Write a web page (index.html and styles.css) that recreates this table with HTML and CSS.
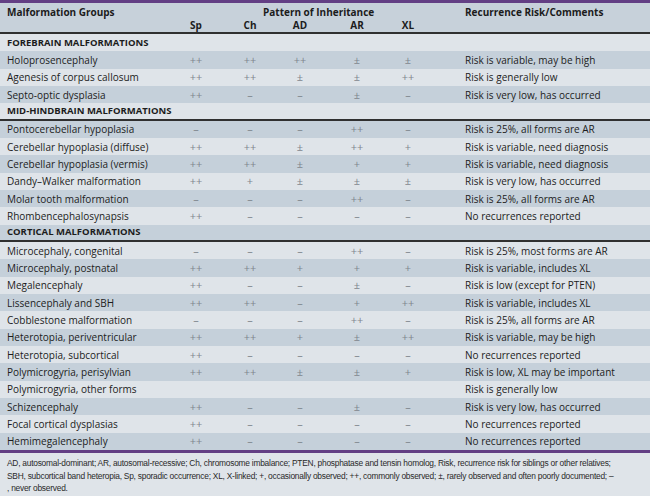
FILE: index.html
```html
<!DOCTYPE html>
<html>
<head>
<meta charset="utf-8">
<link rel="stylesheet" href="styles.css">
</head>
<body>
<div class="page">
  <div class="topbar"></div>
  <div class="thead">
    <div class="hrow">
      <div class="c1">Malformation Groups</div>
      <div class="span">Pattern of Inheritance</div>
      <div class="cm">Recurrence Risk/Comments</div>
    </div>
    <div class="hrow">
      <div class="c1"></div>
      <div class="s">Sp</div><div class="s">Ch</div><div class="s">AD</div><div class="s">AR</div><div class="s">XL</div>
      <div class="cm"></div>
    </div>
  </div>
  <div class="tbody">
    <div class="row sec light"><div class="c1">FOREBRAIN MALFORMATIONS</div></div>
    <div class="row dark"><div class="c1">Holoprosencephaly</div><div class="s">++</div><div class="s">++</div><div class="s">++</div><div class="s">±</div><div class="s">±</div><div class="cm">Risk is variable, may be high</div></div>
    <div class="row light"><div class="c1">Agenesis of corpus callosum</div><div class="s">++</div><div class="s">++</div><div class="s">±</div><div class="s">±</div><div class="s">++</div><div class="cm">Risk is generally low</div></div>
    <div class="row dark"><div class="c1">Septo-optic dysplasia</div><div class="s">++</div><div class="s">–</div><div class="s">–</div><div class="s">±</div><div class="s">–</div><div class="cm">Risk is very low, has occurred</div></div>
    <div class="row sec light ruled"><div class="c1">MID-HINDBRAIN MALFORMATIONS</div></div>
    <div class="row dark"><div class="c1">Pontocerebellar hypoplasia</div><div class="s">–</div><div class="s">–</div><div class="s">–</div><div class="s">++</div><div class="s">–</div><div class="cm">Risk is 25%, all forms are AR</div></div>
    <div class="row light"><div class="c1">Cerebellar hypoplasia (diffuse)</div><div class="s">++</div><div class="s">++</div><div class="s">±</div><div class="s">++</div><div class="s">+</div><div class="cm">Risk is variable, need diagnosis</div></div>
    <div class="row dark"><div class="c1">Cerebellar hypoplasia (vermis)</div><div class="s">++</div><div class="s">++</div><div class="s">±</div><div class="s">+</div><div class="s">+</div><div class="cm">Risk is variable, need diagnosis</div></div>
    <div class="row light"><div class="c1">Dandy–Walker malformation</div><div class="s">++</div><div class="s">+</div><div class="s">±</div><div class="s">±</div><div class="s">±</div><div class="cm">Risk is very low, has occurred</div></div>
    <div class="row dark"><div class="c1">Molar tooth malformation</div><div class="s">–</div><div class="s">–</div><div class="s">–</div><div class="s">++</div><div class="s">–</div><div class="cm">Risk is 25%, all forms are AR</div></div>
    <div class="row light"><div class="c1">Rhombencephalosynapsis</div><div class="s">++</div><div class="s">–</div><div class="s">–</div><div class="s">–</div><div class="s">–</div><div class="cm">No recurrences reported</div></div>
    <div class="row sec dark ruled"><div class="c1">CORTICAL MALFORMATIONS</div></div>
    <div class="row light"><div class="c1">Microcephaly, congenital</div><div class="s">–</div><div class="s">–</div><div class="s">–</div><div class="s">++</div><div class="s">–</div><div class="cm">Risk is 25%, most forms are AR</div></div>
    <div class="row dark"><div class="c1">Microcephaly, postnatal</div><div class="s">++</div><div class="s">++</div><div class="s">+</div><div class="s">+</div><div class="s">+</div><div class="cm">Risk is variable, includes XL</div></div>
    <div class="row light"><div class="c1">Megalencephaly</div><div class="s">++</div><div class="s">–</div><div class="s">–</div><div class="s">±</div><div class="s">–</div><div class="cm">Risk is low (except for PTEN)</div></div>
    <div class="row dark"><div class="c1">Lissencephaly and SBH</div><div class="s">++</div><div class="s">++</div><div class="s">–</div><div class="s">+</div><div class="s">++</div><div class="cm">Risk is variable, includes XL</div></div>
    <div class="row light"><div class="c1">Cobblestone malformation</div><div class="s">–</div><div class="s">–</div><div class="s">–</div><div class="s">++</div><div class="s">–</div><div class="cm">Risk is 25%, all forms are AR</div></div>
    <div class="row dark"><div class="c1">Heterotopia, periventricular</div><div class="s">++</div><div class="s">++</div><div class="s">+</div><div class="s">±</div><div class="s">++</div><div class="cm">Risk is variable, may be high</div></div>
    <div class="row light"><div class="c1">Heterotopia, subcortical</div><div class="s">++</div><div class="s">–</div><div class="s">–</div><div class="s">–</div><div class="s">–</div><div class="cm">No recurrences reported</div></div>
    <div class="row dark"><div class="c1">Polymicrogyria, perisylvian</div><div class="s">++</div><div class="s">++</div><div class="s">±</div><div class="s">±</div><div class="s">+</div><div class="cm">Risk is low, XL may be important</div></div>
    <div class="row light"><div class="c1">Polymicrogyria, other forms</div><div class="s"></div><div class="s"></div><div class="s"></div><div class="s"></div><div class="s"></div><div class="cm">Risk is generally low</div></div>
    <div class="row dark"><div class="c1">Schizencephaly</div><div class="s">++</div><div class="s">–</div><div class="s">–</div><div class="s">±</div><div class="s">–</div><div class="cm">Risk is very low, has occurred</div></div>
    <div class="row light"><div class="c1">Focal cortical dysplasias</div><div class="s">++</div><div class="s">–</div><div class="s">–</div><div class="s">–</div><div class="s">–</div><div class="cm">No recurrences reported</div></div>
    <div class="row dark"><div class="c1">Hemimegalencephaly</div><div class="s">++</div><div class="s">–</div><div class="s">–</div><div class="s">–</div><div class="s">–</div><div class="cm">No recurrences reported</div></div>
  </div>
  <div class="foot">
    <p>AD, autosomal-dominant; AR, autosomal-recessive; Ch, chromosome imbalance; PTEN, phosphatase and tensin homolog, Risk, recurrence risk for siblings or other relatives;<br>SBH, subcortical band heteropia, Sp, sporadic occurrence; XL, X-linked; +, occasionally observed; ++, commonly observed; ±, rarely observed and often poorly documented; –<br>, never observed.</p>
  </div>
</div>
</body>
</html>
```
FILE: styles.css
```css
html, body {
  margin: 0;
  padding: 0;
  background: #dfe4e9;
}
.page {
  width: 650px;
  height: 496px;
  overflow: hidden;
  font-family: "Open Sans", "Noto Sans", sans-serif;
  color: #1c1c1c;
  background: #dfe4e9;
}
.topbar {
  height: 3px;
  background: #633f84;
}
.thead {
  background: #c7d1da;
  border-bottom: 2px solid #303030;
  height: 31px;
  box-sizing: border-box;
  padding-top: 3px;
}
.hrow, .row {
  display: grid;
  grid-template-columns: 170px 52px 56px 44px 70px 32px 1fr;
  align-items: center;
}
.hrow {
  height: 13px;
  font-size: 10px;
  font-weight: 700;
  line-height: 13px;
}
.hrow .s {
  color: #1c1c1c;
  font-size: 10px;
}
.hrow .span {
  grid-column: 2 / 7;
  padding-left: 93px;
  white-space: nowrap;
}
.c1 {
  padding-left: 7px;
  white-space: nowrap;
}
.s {
  text-align: center;
  color: #7f868e;
  font-size: 11px;
  white-space: nowrap;
}
.cm {
  padding-left: 41px;
  white-space: nowrap;
}
.row {
  height: 17.33px;
  box-sizing: border-box;
  font-size: 10px;
  line-height: 14px;
}
.light { background: #dfe4e9; }
.dark { background: #c5d0da; }
.sec .c1 {
  font-weight: 700;
  font-size: 9.5px;
  grid-column: 1 / 8;
}
.ruled {
  border-bottom: 2px solid #303030;
}
.foot {
  border-top: 3px solid #633f84;
  padding: 4px 7px 0;
}
.foot p {
  margin: 0;
  font-family: "Liberation Sans", Arial, sans-serif;
  font-size: 8.4px;
  line-height: 12.8px;
  letter-spacing: -0.24px;
  color: #2a2a2a;
  white-space: nowrap;
}
```
